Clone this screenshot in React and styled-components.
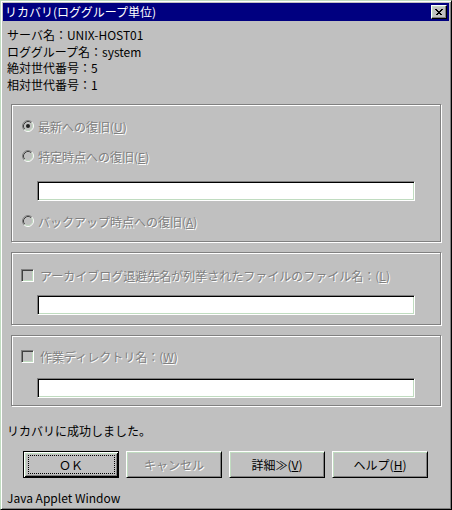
import React from "react";
import styled, { createGlobalStyle, css } from "styled-components";

const GlobalStyle = createGlobalStyle`
  html, body {
    margin: 0;
    padding: 0;
    background: #c0c0c0;
  }
  body {
    font-family: "MS UI Gothic", "Noto Sans CJK JP", sans-serif;
    font-size: 12px;
  }
`;

const Window = styled.div`
  width: 452px;
  height: 510px;
  box-sizing: border-box;
  background: #c0c0c0;
  border: 1px solid;
  border-color: #c0dcc0 #000 #000 #c0dcc0;
  box-shadow: inset 1px 1px 0 #fff, inset -1px -1px 0 #808080;
  padding: 2px;
  display: flex;
  flex-direction: column;
`;

const TitleBar = styled.div`
  height: 18px;
  background: #000080;
  color: #fff;
  display: flex;
  align-items: center;
  justify-content: space-between;
  padding: 0 2px 0 2px;
  font-size: 12px;
  line-height: 18px;
`;

const CloseButton = styled.div`
  width: 16px;
  height: 14px;
  box-sizing: border-box;
  background: #c0c0c0;
  border: 1px solid;
  border-color: #fff #000 #000 #fff;
  box-shadow: inset -1px -1px 0 #808080, inset 1px 1px 0 #c0dcc0;
  display: flex;
  align-items: center;
  justify-content: center;
`;

const Body = styled.div`
  display: flex;
  flex-direction: column;
  padding: 0 4px;
`;

const Info = styled.div`
  margin-top: 6px;
  line-height: 16.5px;
  color: #000;
`;

const Group = styled.div`
  margin: ${(p) => p.$top}px 4px 0 4px;
  height: ${(p) => p.$height}px;
  box-sizing: border-box;
  border: 1px solid #808080;
  box-shadow: inset 1px 1px 0 #fff, 1px 1px 0 #fff;
  padding-top: ${(p) => p.$padTop}px;
  display: flex;
  flex-direction: column;
`;

const OptionRow = styled.div`
  height: 20px;
  display: flex;
  align-items: center;
  padding-left: ${(p) => p.$indent}px;
  gap: ${(p) => p.$gap}px;
  margin-top: ${(p) => p.$top || 0}px;
`;

const disabledText = css`
  color: #808080;
  text-shadow: 1px 1px 0 #fff;
`;

const Label = styled.span`
  ${disabledText};
  white-space: nowrap;
`;

const Key = styled.u`
  text-decoration-thickness: 1px;
  text-underline-offset: 1px;
`;

const TextField = styled.div`
  margin: ${(p) => p.$top}px 25px 0 25px;
  height: 20px;
  box-sizing: border-box;
  background: #fff;
  border: 1px solid;
  border-color: #808080 #fff #fff #808080;
  box-shadow: inset 1px 1px 0 #000, inset -1px -1px 0 #c0dcc0;
`;

const CheckBox = styled.span`
  width: 13px;
  height: 13px;
  box-sizing: border-box;
  background: #c0c0c0;
  border: 1px solid;
  border-color: #808080 #fff #fff #808080;
  box-shadow: inset 1px 1px 0 #404040, inset -1px -1px 0 #c0dcc0;
  flex: none;
`;

const Status = styled.div`
  margin-top: 17px;
  line-height: 16px;
`;

const ButtonRow = styled.div`
  display: flex;
  gap: 7px;
  padding-left: 16px;
  margin-top: 12px;
`;

const Button = styled.div`
  position: relative;
  width: 96px;
  height: 27px;
  box-sizing: border-box;
  background: #c0c0c0;
  display: flex;
  align-items: center;
  justify-content: center;
  white-space: nowrap;
  border: 1px solid;
  ${(p) =>
    p.$default
      ? css`
          border-color: #000;
          box-shadow: inset 1px 1px 0 #fff, inset -1px -1px 0 #000,
            inset 2px 2px 0 #c0dcc0, inset -2px -2px 0 #808080;
        `
      : css`
          border-color: #fff #000 #000 #fff;
          box-shadow: inset 1px 1px 0 #c0dcc0, inset -1px -1px 0 #808080;
        `}
  ${(p) => (p.$disabled ? disabledText : "color: #000;")}
`;

const FocusRing = styled.span`
  position: absolute;
  inset: 3px 3px 3px 4px;
  border: 1px dotted #000;
`;

const Footer = styled.div`
  margin-top: 12px;
  line-height: 16px;
`;

function Radio({ checked }) {
  return (
    <svg width="12" height="12" viewBox="0 0 12 12" style={{ flex: "none" }}>
      <circle cx="6" cy="6" r="5" fill="#c0c0c0" />
      <path d="M2.11 9.89 A5.5 5.5 0 0 1 9.89 2.11" fill="none" stroke="#808080" />
      <path d="M9.89 2.11 A5.5 5.5 0 0 1 2.11 9.89" fill="none" stroke="#fff" />
      <path d="M2.82 9.18 A4.5 4.5 0 0 1 9.18 2.82" fill="none" stroke="#404040" />
      <path d="M9.18 2.82 A4.5 4.5 0 0 1 2.82 9.18" fill="none" stroke="#c0dcc0" />
      {checked && <circle cx="6" cy="6" r="2" fill="#202020" />}
    </svg>
  );
}

function CloseGlyph() {
  return (
    <svg width="8" height="7" viewBox="0 0 8 7">
      <path d="M0.5 0.5 L6.5 6.5 M1.5 0.5 L7.5 6.5 M6.5 0.5 L0.5 6.5 M7.5 0.5 L1.5 6.5" stroke="#000" strokeWidth="1" shapeRendering="crispEdges" />
    </svg>
  );
}

export default function App() {
  return (
    <>
      <GlobalStyle />
      <Window>
        <TitleBar>
          <span>リカバリ(ロググループ単位)</span>
          <CloseButton>
            <CloseGlyph />
          </CloseButton>
        </TitleBar>
        <Body>
          <Info>
            <div>サーバ名：UNIX-HOST01</div>
            <div>ロググループ名：system</div>
            <div>絶対世代番号：5</div>
            <div>相対世代番号：1</div>
          </Info>

          <Group $top={11} $height={138} $padTop={11}>
            <OptionRow $indent={10} $gap={4}>
              <Radio checked />
              <Label>
                最新への復旧(<Key>U</Key>)
              </Label>
            </OptionRow>
            <OptionRow $indent={10} $gap={4} $top={10}>
              <Radio />
              <Label>
                特定時点への復旧(<Key>E</Key>)
              </Label>
            </OptionRow>
            <TextField $top={15} />
            <OptionRow $indent={10} $gap={4} $top={10}>
              <Radio />
              <Label>
                バックアップ時点への復旧(<Key>A</Key>)
              </Label>
            </OptionRow>
          </Group>

          <Group $top={10} $height={73} $padTop={12}>
            <OptionRow $indent={9} $gap={6}>
              <CheckBox />
              <Label>
                アーカイブログ退避先名が列挙されたファイルのファイル名：(<Key>L</Key>)
              </Label>
            </OptionRow>
            <TextField $top={10} />
          </Group>

          <Group $top={10} $height={71} $padTop={10}>
            <OptionRow $indent={9} $gap={6}>
              <CheckBox />
              <Label>
                作業ディレクトリ名：(<Key>W</Key>)
              </Label>
            </OptionRow>
            <TextField $top={12} />
          </Group>

          <Status>リカバリに成功しました。</Status>

          <ButtonRow>
            <Button $default>
              ＯＫ
              <FocusRing />
            </Button>
            <Button $disabled>キャンセル</Button>
            <Button>
              詳細≫(<Key>V</Key>)
            </Button>
            <Button>
              ヘルプ(<Key>H</Key>)
            </Button>
          </ButtonRow>

          <Footer>Java Applet Window</Footer>
        </Body>
      </Window>
    </>
  );
}
